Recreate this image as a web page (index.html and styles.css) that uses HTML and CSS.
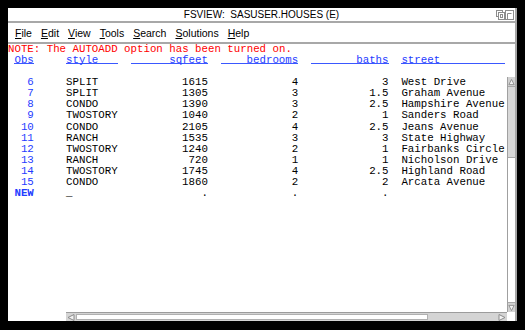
FILE: index.html
```html
<!DOCTYPE html>
<html lang="en">

<head>
    <meta charset="utf-8">
    <title>FSVIEW: SASUSER.HOUSES (E)</title>
    <link rel="stylesheet" href="styles.css">
</head>

<body>

    <section class="window">
        <header class="titlebar">
            <span class="title">FSVIEW:&nbsp; SASUSER.HOUSES (E)</span>
            <svg class="title-icons" width="18" height="10" viewBox="0 0 18 10">
                <rect x="0.5" y="0.5" width="6" height="6" fill="none" stroke="#8c8c8c" />
                <rect x="2.5" y="2.5" width="6" height="7" fill="#fff" stroke="#8c8c8c" />
                <rect x="4.5" y="4.5" width="2" height="3" fill="none" stroke="#8c8c8c" />
                <rect x="9.5" y="0.5" width="8" height="9" fill="none" stroke="#8c8c8c" />
                <path d="M11.5 9.5V3.5H15.5" fill="none" stroke="#8c8c8c" />
            </svg>
        </header>

        <nav class="menubar">
            <span><u>F</u>ile</span>
            <span><u>E</u>dit</span>
            <span><u>V</u>iew</span>
            <span><u>T</u>ools</span>
            <span><u>S</u>earch</span>
            <span><u>S</u>olutions</span>
            <span><u>H</u>elp</span>
        </nav>

        <main class="fsview">
            <p class="note">NOTE: The AUTOADD option has been turned on.</p>

            <div class="row header">
                <span class="obs">Obs</span>
                <span class="txt">style</span>
                <span class="num">sqfeet</span>
                <span class="num">bedrooms</span>
                <span class="num">baths</span>
                <span class="txt">street</span>
            </div>

            <div class="scroller">
                <div class="rows">
                    <div class="row"><span class="obs">6</span><span class="txt">SPLIT</span><span class="num">1615</span><span class="num">4</span><span class="num">3</span><span class="txt">West Drive</span></div>
                    <div class="row"><span class="obs">7</span><span class="txt">SPLIT</span><span class="num">1305</span><span class="num">3</span><span class="num">1.5</span><span class="txt">Graham Avenue</span></div>
                    <div class="row"><span class="obs">8</span><span class="txt">CONDO</span><span class="num">1390</span><span class="num">3</span><span class="num">2.5</span><span class="txt">Hampshire Avenue</span></div>
                    <div class="row"><span class="obs">9</span><span class="txt">TWOSTORY</span><span class="num">1040</span><span class="num">2</span><span class="num">1</span><span class="txt">Sanders Road</span></div>
                    <div class="row"><span class="obs">10</span><span class="txt">CONDO</span><span class="num">2105</span><span class="num">4</span><span class="num">2.5</span><span class="txt">Jeans Avenue</span></div>
                    <div class="row"><span class="obs">11</span><span class="txt">RANCH</span><span class="num">1535</span><span class="num">3</span><span class="num">3</span><span class="txt">State Highway</span></div>
                    <div class="row"><span class="obs">12</span><span class="txt">TWOSTORY</span><span class="num">1240</span><span class="num">2</span><span class="num">1</span><span class="txt">Fairbanks Circle</span></div>
                    <div class="row"><span class="obs">13</span><span class="txt">RANCH</span><span class="num">720</span><span class="num">1</span><span class="num">1</span><span class="txt">Nicholson Drive</span></div>
                    <div class="row"><span class="obs">14</span><span class="txt">TWOSTORY</span><span class="num">1745</span><span class="num">4</span><span class="num">2.5</span><span class="txt">Highland Road</span></div>
                    <div class="row"><span class="obs">15</span><span class="txt">CONDO</span><span class="num">1860</span><span class="num">2</span><span class="num">2</span><span class="txt">Arcata Avenue</span></div>
                    <!-- new record line -->
                    <div class="row new"><span class="obs">NEW</span><span class="txt">_</span><span class="num">.</span><span class="num">.</span><span class="num">.</span><span class="txt"></span></div>
                </div>

                <div class="vscroll">
                    <span class="arrow">
                        <svg width="8" height="8" viewBox="0 0 8 8"><path d="M1 7L4 1L7 7Z" fill="#f2f2f2" stroke="#8a8a8a" /></svg>
                    </span>
                    <span class="thumb"></span>
                    <span class="track"></span>
                    <span class="arrow down">
                        <svg width="8" height="8" viewBox="0 0 8 8"><path d="M1 1L4 7L7 1Z" fill="#f2f2f2" stroke="#8a8a8a" /></svg>
                    </span>
                </div>

                <div class="hscroll">
                    <span class="arrow">
                        <svg width="8" height="7" viewBox="0 0 8 7"><path d="M7 0.5L1 3.5L7 6.5Z" fill="#f2f2f2" stroke="#8a8a8a" /></svg>
                    </span>
                    <span class="thumb"></span>
                    <span class="track"></span>
                    <span class="arrow">
                        <svg width="8" height="7" viewBox="0 0 8 7"><path d="M1 0.5L7 3.5L1 6.5Z" fill="#f2f2f2" stroke="#8a8a8a" /></svg>
                    </span>
                </div>
            </div>
        </main>
    </section>

</body>

</html>
```

FILE: styles.css
```css
* {
    margin: 0;
    padding: 0;
    box-sizing: border-box;
}

body {
    background-color: #000;
    padding: 8px 0 0 8px;
    font-family: "Liberation Sans", Arial, sans-serif;
}

/** Window frame **/
.window {
    display: flex;
    flex-direction: column;
    width: 509px;
    height: 313px;
    background-color: #fff;
    border-right: 2px solid #a6a6a6;
    overflow: hidden;
}

.titlebar {
    display: grid;
    grid-template-columns: 1fr auto 1fr;
    align-items: center;
    height: 15px;
    border-bottom: 2px solid #a8a8a8;
    font-size: 10px;
    color: #000;
}

.title {
    grid-column: 2;
    white-space: nowrap;
}

.title-icons {
    grid-column: 3;
    justify-self: end;
    margin-right: 1px;
}

/** Menu **/
.menubar {
    display: flex;
    align-items: center;
    gap: 9px;
    height: 21px;
    padding-left: 7px;
    border-bottom: 2px solid #a8a8a8;
    font-size: 10.5px;
    color: #000;
}

.menubar u {
    text-decoration-thickness: 1px;
    text-underline-offset: 1px;
}

/** FSVIEW data **/
.fsview {
    display: flex;
    flex-direction: column;
    flex: 1;
    font-family: "Liberation Mono", "Courier New", monospace;
    font-size: 10.75px;
    line-height: 11px;
}

.note {
    height: 11px;
    color: #ff0000;
    white-space: pre;
}

.row {
    display: grid;
    grid-template-columns: 6ch 8ch 12ch 12ch 12ch 16ch;
    column-gap: 2ch;
    padding-left: 1ch;
    height: 11.14px;
    line-height: 11.14px;
    white-space: pre;
    color: #000;
}

.row .obs {
    width: 3ch;
    text-align: right;
    color: #1f3cff;
}

.row .num {
    text-align: right;
}

.header {
    height: 22px;
    line-height: 11px;
}

.header span {
    height: 9px;
    border-bottom: 1px solid #3a58ff;
    color: #1f3cff;
}

.new .obs {
    font-weight: bold;
}

/** Scroll area **/
.scroller {
    display: grid;
    flex: 1;
    grid-template-columns: 9ch 1fr 8px;
    grid-template-rows: 1fr 9px;
}

.rows {
    grid-column: 1 / 3;
    grid-row: 1;
}

.vscroll {
    display: flex;
    flex-direction: column;
    grid-column: 3;
    grid-row: 1;
    border-left: 1px solid #a0a0a0;
    background-color: #fff;
}

.vscroll .arrow {
    display: flex;
    justify-content: center;
    align-items: center;
    height: 10px;
    background-color: #d2d2d2;
    border-bottom: 1px solid #a8a8a8;
}

.vscroll .arrow.down {
    border-bottom: 0;
    border-top: 1px solid #a8a8a8;
}

.vscroll .thumb {
    height: 71px;
    background-color: #d8d8d8;
    border-bottom: 1px solid #a8a8a8;
}

.vscroll .track {
    flex: 1;
}

.hscroll {
    display: flex;
    grid-column: 2;
    grid-row: 2;
    background-color: #d4d4d4;
    border-top: 1px solid #9c9c9c;
}

.hscroll .arrow {
    display: flex;
    justify-content: center;
    align-items: center;
    width: 10px;
}

.hscroll .thumb {
    width: 352px;
    margin: 1px 0;
    background-color: #fff;
    border: 1px solid #b0b0b0;
}

.hscroll .track {
    flex: 1;
}
```
